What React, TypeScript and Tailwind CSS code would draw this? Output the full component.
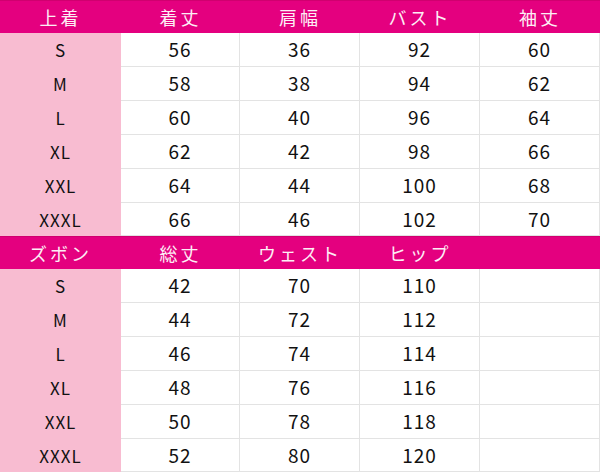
const tops = {
  head: ['上着', '着丈', '肩幅', 'バスト', '袖丈'],
  rows: [
    ['S', '56', '36', '92', '60'],
    ['M', '58', '38', '94', '62'],
    ['L', '60', '40', '96', '64'],
    ['XL', '62', '42', '98', '66'],
    ['XXL', '64', '44', '100', '68'],
    ['XXXL', '66', '46', '102', '70'],
  ],
};

const pants = {
  head: ['ズボン', '総丈', 'ウェスト', 'ヒップ', ''],
  rows: [
    ['S', '42', '70', '110', ''],
    ['M', '44', '72', '112', ''],
    ['L', '46', '74', '114', ''],
    ['XL', '48', '76', '116', ''],
    ['XXL', '50', '78', '118', ''],
    ['XXXL', '52', '80', '120', ''],
  ],
};

const cols = 'grid grid-cols-[121px_119px_120px_120px_120px]';

function HeadRow({ cells }: { cells: string[] }) {
  return (
    <div className={`${cols} h-[33px] bg-[#e4007f] border-t border-[#d0006f]`}>
      {cells.map((c, i) => (
        <div key={i} className="flex items-center justify-center text-[18px] tracking-[3px] text-[#fdeef5]">
          {c}
        </div>
      ))}
    </div>
  );
}

function Rows({ rows }: { rows: string[][] }) {
  return (
    <>
      {rows.map((r, ri) => (
        <div key={ri} className={`${cols} ${ri === rows.length - 1 ? 'h-[33px]' : 'h-[34px]'}`}>
          {r.map((c, i) =>
            i === 0 ? (
              <div key={i} className="flex items-center justify-center bg-[#f8bcd1] text-[17px] tracking-[1px] text-[#111]">
                {c}
              </div>
            ) : (
              <div key={i} className="flex items-center justify-center border-r border-b border-[#e3e3e3] text-[19px] tracking-[1px] text-[#111]">
                {c}
              </div>
            )
          )}
        </div>
      ))}
    </>
  );
}

export default function App() {
  return (
    <div className="w-[600px] h-[474px] bg-white overflow-hidden font-['Noto_Sans_CJK_JP',sans-serif]">
      <HeadRow cells={tops.head} />
      <Rows rows={tops.rows} />
      <HeadRow cells={pants.head} />
      <Rows rows={pants.rows} />
    </div>
  );
}
